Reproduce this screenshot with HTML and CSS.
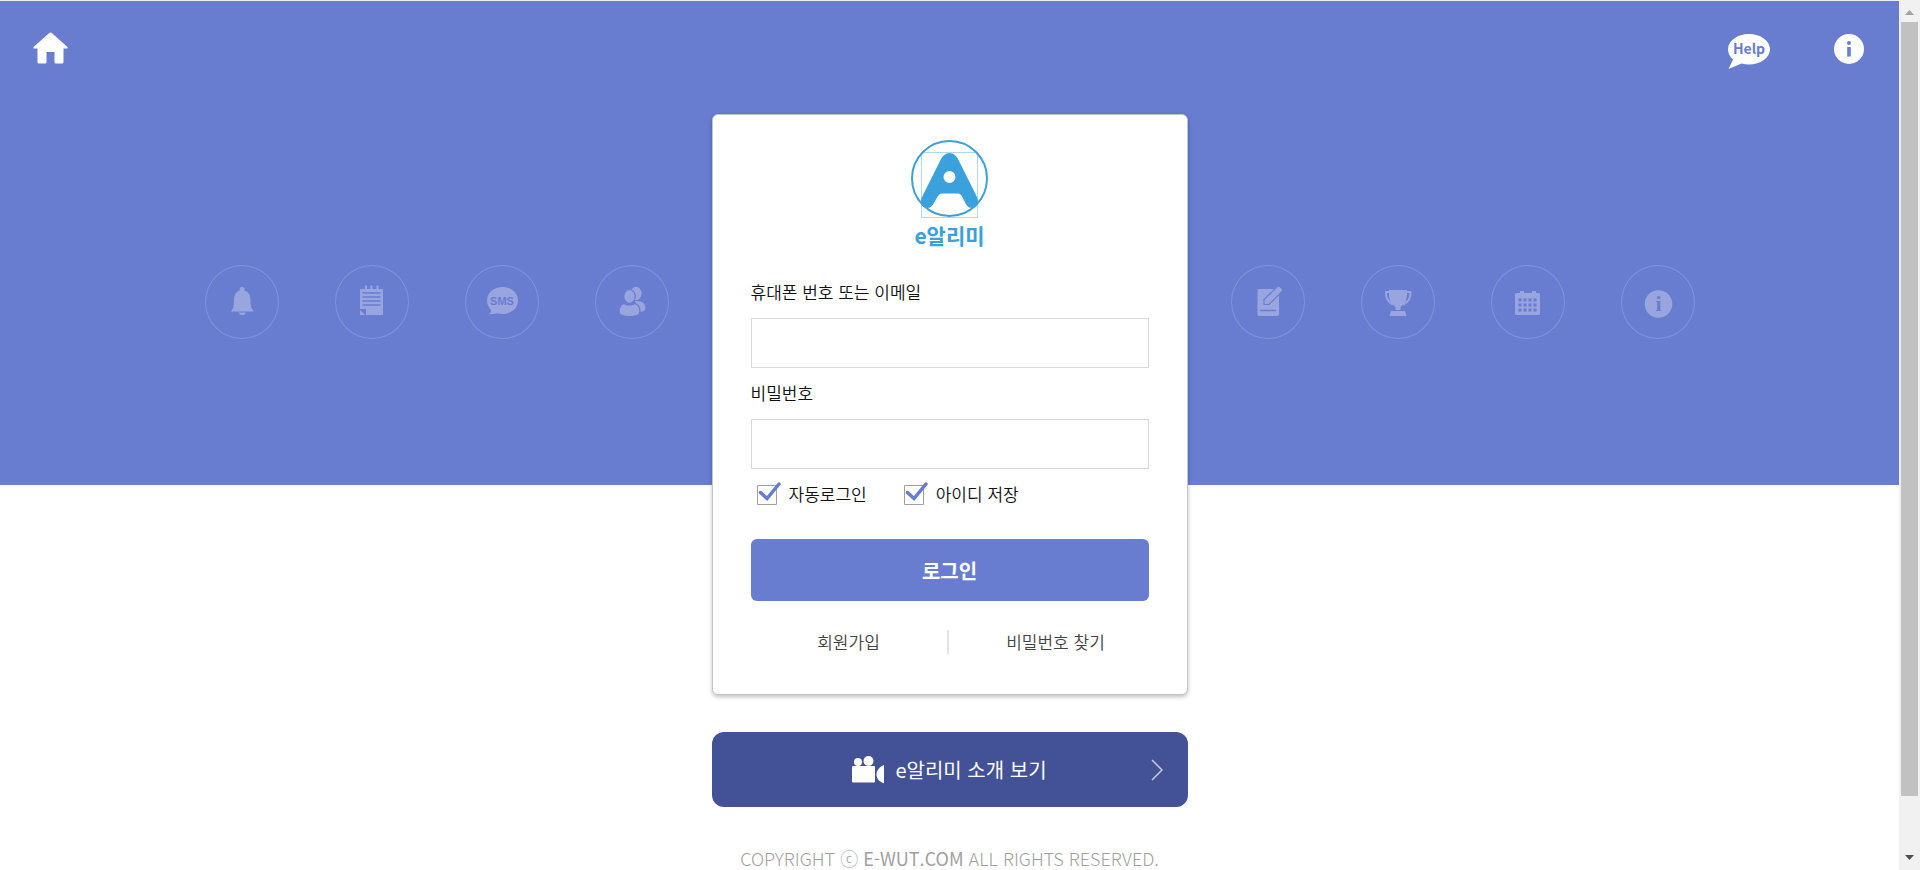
FILE: index.html
```html
<!DOCTYPE html>
<html lang="ko">
<head>
    <meta charset="UTF-8">
    <meta name="viewport" content="width=device-width, initial-scale=1.0">
    <title>e알리미</title>
    <link rel="stylesheet" href="styles.css">
</head>
<body>

<div class="page">
    <header class="header">
        <a href="#" class="home" aria-label="홈">
            <svg width="35" height="32" viewBox="0 0 35 32"><path d="M17.500 0.500Q18.300 0.500 19 1.200L34.500 15V16.500H30.500V30Q30.500 31.500 29 31.500H23Q21.500 31.500 21.500 30V20H13.500V30Q13.500 31.500 12 31.500H6Q4.500 31.500 4.500 30V16.500H0.500V15L16 1.200Q16.700 0.500 17.500 0.500Z" fill="#fff"/></svg>
        </a>
        <nav class="header-links">
            <a href="#" aria-label="도움말">
                <svg width="42" height="36" viewBox="0 0 42 36"><path d="M21 0C32.600 0 42 6.800 42 15.200S32.600 30.500 21 30.500C18.400 30.500 15.800 30.200 13.500 29.500L0.500 35L5 25.500C2 22.800 0 19.300 0 15.200C0 6.800 9.400 0 21 0Z" fill="#fff"/><text x="21" y="20" text-anchor="middle" class="help-text">Help</text></svg>
            </a>
            <a href="#" aria-label="안내">
                <svg width="30" height="30" viewBox="0 0 30 30"><circle cx="15" cy="15" r="15" fill="#fff"/><circle cx="15" cy="9" r="2" fill="#687dd0"/><path d="M13.200 13H16.800V22.500H13.200Z" fill="#687dd0"/></svg>
            </a>
        </nav>
    </header>

    <main class="main">
        <ul class="features">
            <li><svg viewBox="0 0 74 74"><path d="M37 22a2.500 2.500 0 0 1 2.500 3.500C44 27 45.500 31 45.500 35C45.500 41 46 43 49 46.500H26C28.500 43 29 41 29 35C29 31 30.500 27 34.700 25.500A2.500 2.500 0 0 1 37 22ZM33.500 47.500H41Q40 50 37.300 50T33.500 47.500Z"/></svg></li>
            <li><svg viewBox="0 0 74 74"><path d="M25 24H48V50H31V44H25Z"/><path d="M25 45L30 50H25Z"/><path d="M31 20.500V24M36.500 20.500V24M42.500 20.500V24" class="line"/><path d="M27.500 28H45.500M27.500 32H45.500M27.500 36H45.500M27.500 40H45.500" class="cut"/></svg></li>
            <li><svg viewBox="0 0 74 74"><path d="M37.500 22C46 22 53 27.500 53 35.500S46 49 37.500 49Q34.500 49 32 48.200Q29 49.500 24 49.300Q26.500 47.500 26 45C23.500 42.500 22 39.500 22 35.500C22 27.500 29 22 37.500 22Z"/><text x="37" y="40" text-anchor="middle" class="sms-text">SMS</text></svg></li>
            <li><svg viewBox="0 0 74 74"><ellipse cx="41" cy="28.500" rx="5.500" ry="6.800"/><path d="M40 36Q50 35 50.500 43Q50.500 47 44 47Z"/><g class="outlined"><ellipse cx="34.500" cy="31.500" rx="5.800" ry="7"/><path d="M29 38.500Q34.500 41.500 40 38.500Q45 40 45 47Q44.500 51.500 34.500 51.500T24 47Q24 40 29 38.500Z"/></g></svg></li>
        </ul>

        <div class="center">
            <section class="login-card">
                <h1 class="logo">
                    <svg width="78" height="78" viewBox="0 0 78 78"><circle cx="38.500" cy="38.500" r="37.500" fill="none" stroke="#3aa1dc" stroke-width="2"/><path d="M10.500 12.500H66.500V77.500H10.500Z" fill="none" stroke="#3aa1dc" stroke-opacity=".4"/><path fill-rule="evenodd" d="M38.500 13C42.500 13 45.500 16 47.500 20L65.500 56C68.500 62 66.500 68 61 68C53 68 53 53.500 47 53.500H31C25 53.500 24 68 16.500 68C10.500 68 8.500 62 11.500 56L29.500 20C31.500 16 34.500 13 38.500 13ZM38.500 31a6 6 0 1 0 0 12a6 6 0 1 0 0-12Z" fill="#3aa1dc"/></svg>
                    <span>e알리미</span>
                </h1>
                <form>
                    <label class="field-label" for="user-id">휴대폰 번호 또는 이메일</label>
                    <input class="field" type="text" id="user-id">
                    <label class="field-label" for="user-pw">비밀번호</label>
                    <input class="field" type="password" id="user-pw">
                    <div class="checks">
                        <label><input type="checkbox" checked>자동로그인</label>
                        <label><input type="checkbox" checked>아이디 저장</label>
                    </div>
                    <button type="button" class="btn-login">로그인</button>
                </form>
                <div class="card-links">
                    <a href="#">회원가입</a>
                    <a href="#">비밀번호 찾기</a>
                </div>
            </section>

            <a href="#" class="intro">
                <svg width="32" height="28" viewBox="0 0 32 28" fill="#fff"><circle cx="6" cy="6" r="4"/><circle cx="16.500" cy="5" r="5"/><rect y="10" width="23" height="16.500" rx="1"/><path d="M32 9V27.500C28 26 24.500 23 24.500 18.500S28 10.500 32 9Z"/></svg>
                <span>e알리미 소개 보기</span>
                <svg class="arrow" width="12" height="22" viewBox="0 0 12 22" fill="none" stroke="#c5cbe2" stroke-width="1.500"><path d="M1 1L11 11L1 21"/></svg>
            </a>
        </div>

        <ul class="features">
            <li><svg viewBox="0 0 74 74"><path d="M28 24H46Q48 24 48 26V49Q48 51 46 51H28Q26.500 51 26.500 49V26Q26.500 24 28 24Z"/><path class="outlined" d="M33 34.500L46.500 21.500Q48 20.500 49.500 22L51 23.500Q52.500 25 51 26.500L38 39.500H33Z"/><path d="M29 45.500H45" class="cut"/></svg></li>
            <li><svg viewBox="0 0 74 74"><path d="M28 25H46Q47 38 39.500 42V45H34.500V42Q27 38 28 25ZM30 46H44L45.500 51H28.500Z"/><path d="M28 27H25Q24.500 36 32 39.500M46 27H49.500Q50 36 42 39.500" class="line"/></svg></li>
            <li><svg viewBox="0 0 74 74"><path d="M26 28H29V26H33V28H41V26H45V28H47.500Q49 28 49 29.500V48.500Q49 50 47.500 50H25.500Q24 50 24 48.500V29.500Q24 28 26 28Z"/><path d="M27.500 35H46M27.500 40H46M27.500 45H46" class="cut dots"/></svg></li>
            <li><svg viewBox="0 0 74 74"><circle cx="37.500" cy="39" r="13.800"/><text x="37.500" y="46" text-anchor="middle" class="info-text">i</text></svg></li>
        </ul>
    </main>

    <footer>COPYRIGHT ⓒ <strong>E-WUT.COM</strong> ALL RIGHTS RESERVED.</footer>
</div>

<div class="scrollbar" aria-hidden="true">
    <svg width="9" height="5" viewBox="0 0 9 5"><path d="M0 5L4.500 0L9 5Z" fill="#a3a3a3"/></svg>
    <div class="thumb"></div>
    <svg width="9" height="5" viewBox="0 0 9 5"><path d="M0 0L4.500 5L9 0Z" fill="#505050"/></svg>
</div>

</body>
</html>
```

FILE: styles.css
```css
* {
    box-sizing: border-box;
}

body {
    margin: 0;
    display: flex;
    height: 100vh;
    overflow: hidden;
    font-family: 'Noto Sans CJK KR', sans-serif;
    font-size: 17px;
    font-weight: 350;
    color: #111;
}

a {
    color: inherit;
    text-decoration: none;
}

svg {
    display: block;
}

.page {
    flex: 1;
    overflow: hidden;
    border-top: 1px solid #eee;
    background: linear-gradient(#687dd0 484px, #fff 484px);
}

/* Header */
.header {
    display: flex;
    justify-content: space-between;
    align-items: flex-start;
    height: 113px;
    padding: 31px 35px 0 33px;
}

.header-links {
    display: flex;
    gap: 64px;
    padding-top: 2px;
}

.help-text {
    font-size: 14px;
    font-weight: 700;
    fill: #687dd0;
}

.main {
    display: flex;
    justify-content: center;
    align-items: flex-start;
    gap: 43px;
}

/* Round icons on both sides of the card */
.features {
    display: flex;
    gap: 56px;
    margin: 0;
    padding: 151px 0 0;
    list-style: none;
}

.features li {
    width: 74px;
    height: 74px;
    border-radius: 50%;
    box-shadow: inset 0 0 0 1px #8192d8;
}

.features svg {
    width: 74px;
    height: 74px;
    fill: #98a5df;
}

.features .line {
    fill: none;
    stroke: #98a5df;
    stroke-width: 2;
}

.features .cut {
    stroke: #687dd0;
    stroke-width: 1.5;
}

.features .dots {
    stroke-width: 3;
    stroke-dasharray: 3 2;
}

.features .outlined {
    stroke: #687dd0;
    stroke-width: 1.2;
}

.features .sms-text {
    font-family: 'Liberation Sans', sans-serif;
    font-size: 11px;
    font-weight: 700;
    fill: #687dd0;
}

.features .info-text {
    font-family: 'Liberation Serif', serif;
    font-size: 22px;
    font-weight: 700;
    fill: #687dd0;
}

/* Login card */
.center {
    width: 476px;
}

.login-card {
    padding: 25px 38px 40px;
    background: #fff;
    border: 1px solid #c4c4c8;
    border-radius: 6px;
    box-shadow: 0 2px 4px rgba(0, 0, 0, 0.25);
}

.logo {
    display: flex;
    flex-direction: column;
    align-items: center;
    margin: 0 0 14px;
    font-size: 21px;
    line-height: 35px;
    font-weight: 700;
    color: #3aa1dc;
}

.field-label {
    display: block;
    padding-bottom: 2px;
    line-height: 49px;
}

.field {
    display: block;
    width: 100%;
    height: 50px;
    padding: 0 12px;
    border: 1px solid #d9d9d9;
    font: inherit;
}

.checks {
    display: flex;
    gap: 37px;
    padding: 11px 6px 31px;
    line-height: 28px;
}

.checks label {
    display: flex;
    align-items: center;
    gap: 8px;
}

.checks input {
    appearance: none;
    width: 24px;
    height: 24px;
    margin: 0;
    background: url("data:image/svg+xml,%3Csvg xmlns='http://www.w3.org/2000/svg' width='24' height='24' fill='none'%3E%3Cpath d='M.5 3.500H19.500V22.500H.5Z' stroke='%23a0a0a0'/%3E%3C/svg%3E");
}

.checks input:checked {
    background: url("data:image/svg+xml,%3Csvg xmlns='http://www.w3.org/2000/svg' width='24' height='24' fill='none'%3E%3Cpath d='M.5 3.500H19.500V22.500H.5Z' stroke='%23a0a0a0'/%3E%3Cpath d='M3.500 10.500L10 16.500L22 2' stroke='%23687dd0' stroke-width='3.5' stroke-linecap='round'/%3E%3C/svg%3E");
}

.btn-login {
    display: block;
    width: 100%;
    height: 62px;
    padding: 0;
    border: 0;
    border-radius: 6px;
    background: #687dd0;
    color: #fff;
    font: inherit;
    font-size: 20px;
    font-weight: 700;
    cursor: pointer;
}

.card-links {
    display: flex;
    align-items: center;
    margin-top: 29px;
    line-height: 24px;
    color: #444;
    text-align: center;
}

.card-links a:first-child {
    width: 198px;
    border-right: 2px solid #e2e2e6;
}

.card-links a:last-child {
    flex: 1;
    padding-left: 14px;
}

.intro {
    display: flex;
    align-items: center;
    justify-content: center;
    gap: 11px;
    position: relative;
    height: 75px;
    margin-top: 37px;
    border-radius: 12px;
    background: #435296;
    color: #fff;
    font-size: 20px;
    font-weight: 400;
}

.arrow {
    position: absolute;
    right: 25px;
}

footer {
    margin-top: 37px;
    font-size: 18px;
    font-weight: 300;
    line-height: 28px;
    color: #a0a0a0;
    text-align: center;
}

/* Scrollbar */
.scrollbar {
    display: flex;
    flex-direction: column;
    align-items: center;
    width: 21px;
    padding: 10px 2px;
    background: #f1f1f1;
}

.thumb {
    width: 17px;
    height: 91%;
    margin: 7px 0 auto;
    background: #c1c1c1;
}
```
